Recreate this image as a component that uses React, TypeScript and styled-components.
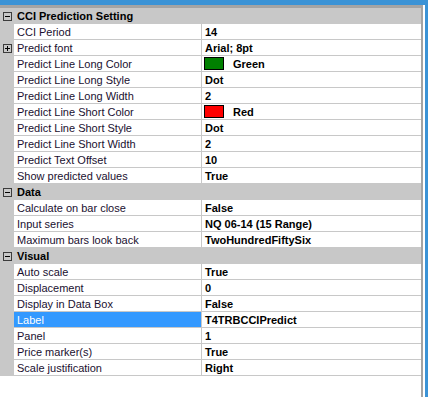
import React from "react";
import styled, { createGlobalStyle } from "styled-components";

const GlobalStyle = createGlobalStyle`
  html, body { margin: 0; padding: 0; background: #ffffff; }
  body { font-family: "Liberation Sans", Arial, sans-serif; font-size: 11px; }
`;

const BLUE = "#3b93d6";
const GRAY = "#c8c8c8";
const LINE = "#c8c8c8";

const Frame = styled.div`
  width: 428px;
  height: 397px;
  box-sizing: border-box;
  border-top: 5px solid ${BLUE};
  border-right: 3px solid ${BLUE};
  background: #ffffff;
  display: flex;
`;

const Panel = styled.div`
  flex: 1;
  margin-right: 2px;
  border-top: 3px solid #a4a4a4;
  border-right: 2px solid #a4a4a4;
  display: flex;
  flex-direction: column;
  background: #ffffff;
`;

const CategoryRow = styled.div`
  height: 16px;
  display: flex;
  align-items: center;
  background: ${GRAY};
`;

const PropRow = styled.div`
  height: 16px;
  display: flex;
`;

const Margin = styled.div`
  width: 14px;
  flex: 0 0 14px;
  background: ${GRAY};
  display: flex;
  align-items: center;
  justify-content: flex-start;
  padding-left: 3px;
  box-sizing: border-box;
`;

const ExpandBox = styled.div`
  width: 9px;
  height: 9px;
  box-sizing: border-box;
  border: 1px solid #3c3c3c;
  position: relative;
  &::before {
    content: "";
    position: absolute;
    left: 1px;
    top: 3px;
    width: 5px;
    height: 1px;
    background: #000;
  }
  &::after {
    content: "";
    display: ${(p: { $plus?: boolean }) => (p.$plus ? "block" : "none")};
    position: absolute;
    left: 3px;
    top: 1px;
    width: 1px;
    height: 5px;
    background: #000;
  }
`;

const CategoryTitle = styled.div`
  padding-left: 3px;
  font-weight: bold;
  color: #000;
  white-space: nowrap;
`;

const NameCell = styled.div<{ $selected?: boolean }>`
  width: 188px;
  flex: 0 0 188px;
  box-sizing: border-box;
  border-bottom: 1px solid ${LINE};
  border-right: 1px solid ${LINE};
  background: ${(p) => (p.$selected ? "#3399ff" : "#ffffff")};
  color: ${(p) => (p.$selected ? "#ffffff" : "#1a1030")};
  padding-left: 3px;
  display: flex;
  align-items: center;
  white-space: nowrap;
  overflow: hidden;
`;

const ValueCell = styled.div`
  flex: 1;
  box-sizing: border-box;
  border-bottom: 1px solid ${LINE};
  padding-left: 3px;
  display: flex;
  align-items: center;
  font-weight: bold;
  color: #000;
  white-space: nowrap;
  overflow: hidden;
`;

const Swatch = styled.span<{ $color: string }>`
  display: inline-block;
  width: 20px;
  height: 13px;
  box-sizing: border-box;
  border: 1px solid #000;
  background: ${(p) => p.$color};
  margin-left: -1px;
  margin-right: 9px;
`;

type Prop = {
  name: string;
  value: string;
  swatch?: string;
  expandable?: boolean;
  selected?: boolean;
};

type Category = { title: string; props: Prop[] };

const data: Category[] = [
  {
    title: "CCI Prediction Setting",
    props: [
      { name: "CCI Period", value: "14" },
      { name: "Predict font", value: "Arial; 8pt", expandable: true },
      { name: "Predict Line Long Color", value: "Green", swatch: "#008000" },
      { name: "Predict Line Long Style", value: "Dot" },
      { name: "Predict Line Long Width", value: "2" },
      { name: "Predict Line Short Color", value: "Red", swatch: "#ff0000" },
      { name: "Predict Line Short Style", value: "Dot" },
      { name: "Predict Line Short Width", value: "2" },
      { name: "Predict Text Offset", value: "10" },
      { name: "Show predicted values", value: "True" },
    ],
  },
  {
    title: "Data",
    props: [
      { name: "Calculate on bar close", value: "False" },
      { name: "Input series", value: "NQ 06-14 (15 Range)" },
      { name: "Maximum bars look back", value: "TwoHundredFiftySix" },
    ],
  },
  {
    title: "Visual",
    props: [
      { name: "Auto scale", value: "True" },
      { name: "Displacement", value: "0" },
      { name: "Display in Data Box", value: "False" },
      { name: "Label", value: "T4TRBCCIPredict", selected: true },
      { name: "Panel", value: "1" },
      { name: "Price marker(s)", value: "True" },
      { name: "Scale justification", value: "Right" },
    ],
  },
];

export default function App() {
  return (
    <>
      <GlobalStyle />
      <Frame>
        <Panel>
          {data.map((cat) => (
            <React.Fragment key={cat.title}>
              <CategoryRow>
                <Margin>
                  <ExpandBox />
                </Margin>
                <CategoryTitle>{cat.title}</CategoryTitle>
              </CategoryRow>
              {cat.props.map((p) => (
                <PropRow key={p.name}>
                  <Margin>{p.expandable && <ExpandBox $plus />}</Margin>
                  <NameCell $selected={p.selected}>{p.name}</NameCell>
                  <ValueCell>
                    {p.swatch && <Swatch $color={p.swatch} />}
                    {p.value}
                  </ValueCell>
                </PropRow>
              ))}
            </React.Fragment>
          ))}
        </Panel>
      </Frame>
    </>
  );
}
